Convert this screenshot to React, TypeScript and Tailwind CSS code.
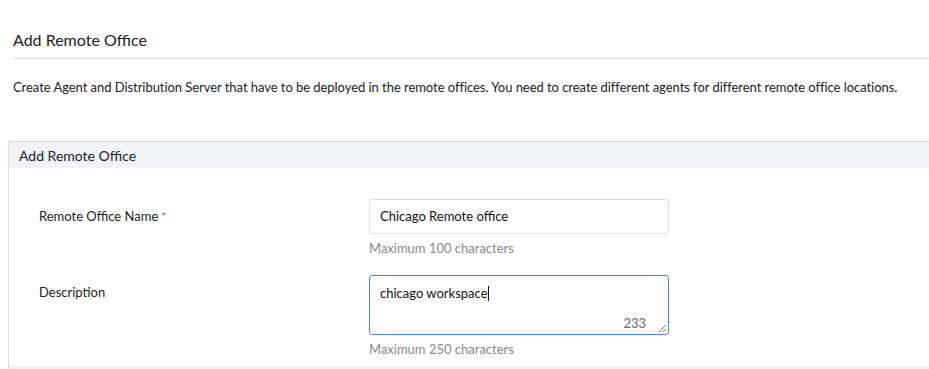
import React from "react";

export default function App() {
  return (
    <div className="w-[929px] h-[369px] overflow-hidden bg-white text-[#333] font-['Lato','Liberation_Sans',sans-serif]">
      <div className="ml-[13px] border-b border-[#e2e3e6] pt-[30px] pb-[8px]">
        <h1 className="text-[16px] leading-[20px] text-[#222]">Add Remote Office</h1>
      </div>
      <p className="ml-[13px] pt-[19px] text-[13px] leading-[18px] text-[#222] tracking-[-0.05px]">
        Create Agent and Distribution Server that have to be deployed in the remote offices. You need to create different agents for different remote office locations.
      </p>
      <div className="ml-[8px] mt-[45px] border-t border-l border-[#dcdee3]">
        <div className="h-[26px] bg-[#f2f3f7] pl-[10px] flex items-center text-[14px] text-[#222]">
          Add Remote Office
        </div>
        <div className="pl-[30px] pt-[31px] pb-[8px]">
          <div className="flex">
            <div className="w-[330px] h-[34px] flex items-center text-[13px] text-[#222] pt-[1px]">
              Remote Office Name<span className="text-[#e5414a] ml-[3px] text-[12px]">*</span>
            </div>
            <div>
              <div className="w-[300px] h-[35px] border border-[#dcdde0] rounded-[3px] px-[10px] flex items-center text-[13px] text-[#111]">
                Chicago Remote office
              </div>
              <div className="mt-[5px] text-[13px] leading-[18px] text-[#888]">Maximum 100 characters</div>
            </div>
          </div>
          <div className="flex mt-[18px]">
            <div className="w-[330px] pt-[8px] text-[13px] leading-[18px] text-[#222]">Description</div>
            <div>
              <div className="relative w-[300px] h-[60px] border border-[#4a86e8] rounded-[3px] px-[10px] pt-[8px] text-[13px] leading-[18px] text-[#111]">
                <span>chicago workspace</span>
                <span className="inline-block w-[1px] h-[15px] bg-[#111] align-[-3px]" />
                <span className="absolute right-[22px] bottom-[2px] text-[13px] text-[#666]">233</span>
                <svg className="absolute right-[1px] bottom-[1px]" width="9" height="9" viewBox="0 0 9 9">
                  <path d="M8 1 L1 8 M8 5 L5 8" stroke="#777" strokeWidth="1" />
                </svg>
              </div>
              <div className="mt-[5px] text-[13px] leading-[18px] text-[#888]">Maximum 250 characters</div>
            </div>
          </div>
        </div>
        <div className="h-[4px] bg-[#f2f3f7]" />
      </div>
    </div>
  );
}
